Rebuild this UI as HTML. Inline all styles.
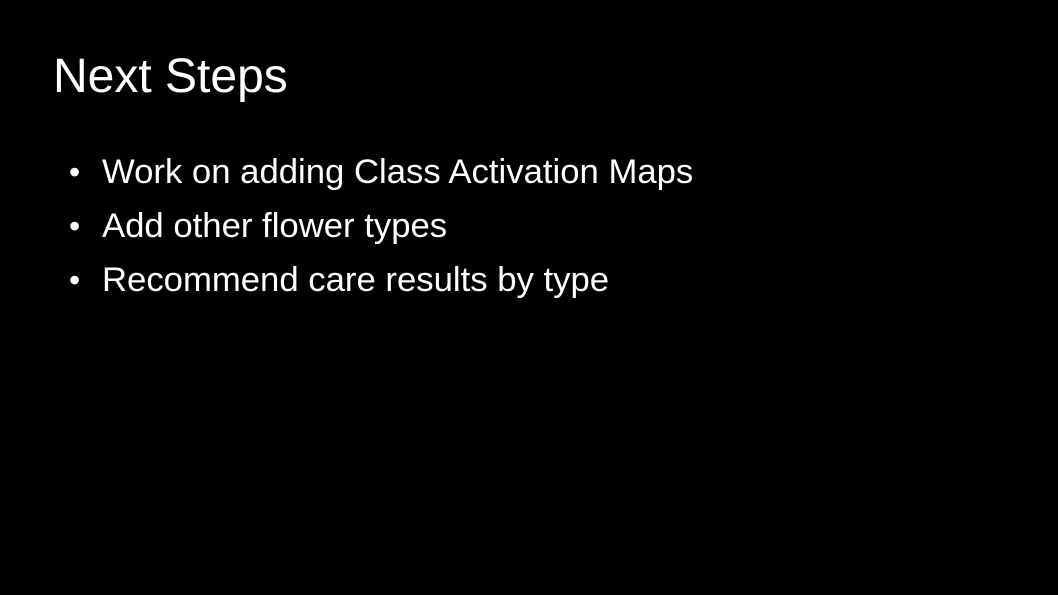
<!DOCTYPE html>
<html><head><style>
body{margin:0;width:1058px;height:595px;background:#000;overflow:hidden;font-family:"Liberation Sans",sans-serif;color:#fff}
h1{position:absolute;left:53px;top:49px;margin:0;font-weight:normal;font-size:48px;line-height:56px}
.l{position:absolute;left:102px;font-size:34.7px;line-height:40px;white-space:nowrap}
.b{position:absolute;left:69px;font-size:32px;line-height:40px}
</style></head><body>
<h1>Next Steps</h1>
<div class="b" style="top:152px">•</div><div class="l" style="top:152px">Work on adding Class Activation Maps</div>
<div class="b" style="top:206px">•</div><div class="l" style="top:206px">Add other flower types</div>
<div class="b" style="top:260px">•</div><div class="l" style="top:260px">Recommend care results by type</div>
</body></html>
